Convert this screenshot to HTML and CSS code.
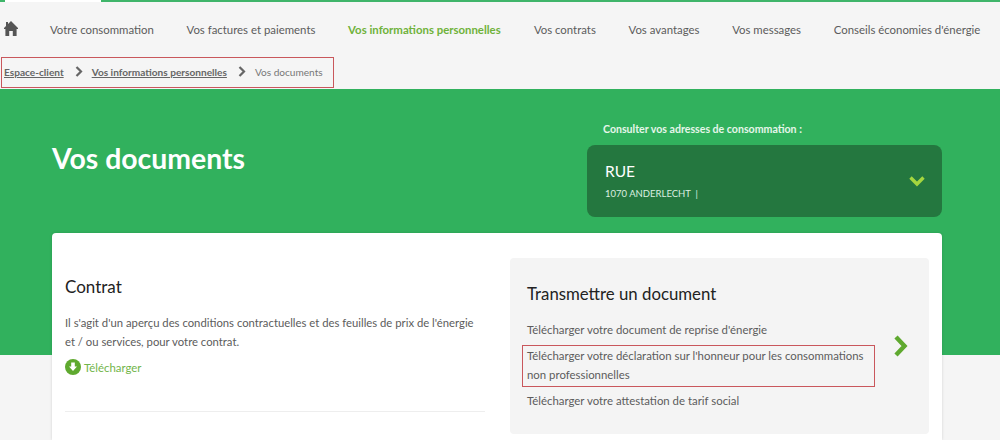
FILE: index.html
```html
<!DOCTYPE html>
<html lang="fr">
<head>
	<meta charset="utf-8">
	<title>Vos documents</title>
	<link rel="stylesheet" href="styles.css">
</head>
<body>

<div class="topline"><div class="toptab"></div></div>

<nav class="nav">
	<a class="nav-home" href="#">
		<svg width="14" height="15" viewBox="0 0 14 15"><path d="M7 0 L14 7 V8 H12.6 V15 H8.8 V10 H5.2 V15 H1.4 V8 H0 V7 L2 5 V1 H4 V3 Z" fill="#555"/></svg>
	</a>
	<a class="nav-item" href="#">Votre consommation</a>
	<a class="nav-item" href="#">Vos factures et paiements</a>
	<a class="nav-item active" href="#">Vos informations personnelles</a>
	<a class="nav-item" href="#">Vos contrats</a>
	<a class="nav-item" href="#">Vos avantages</a>
	<a class="nav-item" href="#">Vos messages</a>
	<a class="nav-item" href="#">Conseils économies d'énergie</a>
</nav>

<div class="crumbs marked">
	<a href="#">Espace-client</a>
	<svg class="crumb-sep" width="8" height="11" viewBox="0 0 8 11"><path d="M1.5 1 L6 5.5 L1.5 10" fill="none" stroke="#666" stroke-width="2.2"/></svg>
	<a href="#">Vos informations personnelles</a>
	<svg class="crumb-sep" width="8" height="11" viewBox="0 0 8 11"><path d="M1.5 1 L6 5.5 L1.5 10" fill="none" stroke="#666" stroke-width="2.2"/></svg>
	<span>Vos documents</span>
</div>

<div class="hero">
	<h1>Vos documents</h1>
	<div class="addr">
		<div class="addr-label">Consulter vos adresses de consommation :</div>
		<div class="addr-box">
			<div class="addr-text">
				<div class="addr-street">RUE</div>
				<div class="addr-city">1070 ANDERLECHT &nbsp;|</div>
			</div>
			<svg width="16" height="11" viewBox="0 0 16 11"><path d="M1.5 1.5 L8 8 L14.5 1.5" fill="none" stroke="#a5d63f" stroke-width="3.4"/></svg>
		</div>
	</div>
</div>

<div class="card">
	<div class="col-left">
		<h2>Contrat</h2>
		<p>Il s'agit d'un aperçu des conditions contractuelles et des feuilles de prix de l'énergie et / ou services, pour votre contrat.</p>
		<a class="dl" href="#">
			<svg width="16" height="16" viewBox="0 0 16 16"><circle cx="8" cy="8" r="8" fill="#5fa92f"/><path d="M6.2 3.5 H9.8 V7.5 H12 L8 12 L4 7.5 H6.2 Z" fill="#fff"/></svg>
			Télécharger
		</a>
		<hr>
	</div>
	<div class="panel">
		<h2>Transmettre un document</h2>
		<div class="panel-row">
			<ul>
				<li>Télécharger votre document de reprise d'énergie</li>
				<li class="marked">Télécharger votre déclaration sur l'honneur pour les consommations non professionnelles</li>
				<li>Télécharger votre attestation de tarif social</li>
			</ul>
			<svg class="panel-arrow" width="15" height="22" viewBox="0 0 15 22"><path d="M3 2 L11.5 11 L3 20" fill="none" stroke="#5fa92f" stroke-width="4.4"/></svg>
		</div>
	</div>
</div>

</body>
</html>
```

FILE: styles.css
```css
html,body{
	margin:0;
	height:440px;
	overflow:hidden;
}
body{
	background-color:#f5f5f5;
	font-family:Lato,"Open Sans",sans-serif;
	color:#5c5c5c;
}
a{
	color:inherit;
	text-decoration:none;
}

.marked{
	border:1px solid #c9575c;
}

.topline{
	height:2px;
	padding-left:5px;
	background-color:#3fb56a;
}
.toptab{
	width:96px;
	height:2px;
	background-color:#fff;
}

.nav{
	display:flex;
	align-items:center;
	height:55px;
	font-size:11.4px;
}
.nav-home{
	display:flex;
	flex:none;
	width:50px;
	padding-left:4px;
	box-sizing:border-box;
	margin-bottom:2px;
}
.nav-item{
	margin-right:32.7px;
	white-space:nowrap;
}
.nav-item.active{
	margin-right:33.2px;
	color:#6fb23a;
	font-weight:700;
}

.crumbs{
	display:flex;
	align-items:center;
	box-sizing:border-box;
	width:333px;
	height:31px;
	margin-left:1px;
	padding:0 0 2px 2px;
	font-size:10.1px;
	color:#777;
	white-space:nowrap;
}
.crumbs a{
	font-weight:700;
	color:#666;
	text-decoration:underline;
}
.crumb-sep{
	margin:0 9px 0 11px;
}

.hero{
	display:flex;
	justify-content:space-between;
	box-sizing:border-box;
	height:266px;
	margin-top:1px;
	padding:0 58px 0 52px;
	background-color:#31b15d;
}
.hero h1{
	margin:50px 0 0;
	font-size:28.4px;
	line-height:38px;
	font-weight:700;
	color:#fff;
}
.addr{
	width:355px;
	padding-top:33px;
}
.addr-label{
	padding-left:16px;
	font-size:10.6px;
	line-height:14px;
	font-weight:700;
	color:#e6f6ea;
}
.addr-box{
	display:flex;
	align-items:center;
	justify-content:space-between;
	box-sizing:border-box;
	height:72px;
	margin-top:9px;
	padding:0 17px 0 18px;
	border-radius:8px;
	background-color:#24773f;
	color:#fff;
}
.addr-text{
	margin-bottom:2px;
}
.addr-street{
	font-size:15.5px;
	line-height:22px;
}
.addr-city{
	margin-top:5px;
	font-size:9.5px;
	line-height:13px;
	color:#dcefe0;
}

.card{
	display:flex;
	justify-content:space-between;
	box-sizing:border-box;
	width:890px;
	height:207px;
	margin:-122px 0 0 52px;
	position:relative;
	padding:25px 13px 0;
	background-color:#fff;
	border-radius:4px 4px 0 0;
	box-shadow:0 0 3px rgba(0,0,0,.15);
}
h2{
	margin:0;
	font-size:17px;
	line-height:22px;
	font-weight:400;
	color:#222;
}
.col-left{
	width:420px;
}
.col-left h2{
	margin-top:18px;
}
.col-left p{
	margin:15px 0 0;
	font-size:11.3px;
	line-height:19px;
}
.dl{
	display:flex;
	align-items:center;
	gap:3px;
	margin-top:8px;
	font-size:11.4px;
	color:#72b54a;
}
.col-left hr{
	margin:36px 0 0;
	border:0;
	border-top:1px solid #eee;
}

.panel{
	box-sizing:border-box;
	width:419px;
	height:176px;
	padding:25px 17px 0;
	background-color:#f4f4f4;
	border-radius:4px;
}
.panel h2{
	font-size:16.8px;
}
.panel-row{
	display:flex;
	align-items:center;
}
.panel ul{
	width:348px;
	margin:11px 0 0;
	padding:0;
	list-style:none;
	font-size:11.4px;
	line-height:19px;
}
.panel li{
	padding:4px 0;
}
.panel li.marked{
	margin:2px 0 0 -5px;
	padding:0 4px 2px;
}
.panel-arrow{
	margin:0 0 28px 18px;
}
```
